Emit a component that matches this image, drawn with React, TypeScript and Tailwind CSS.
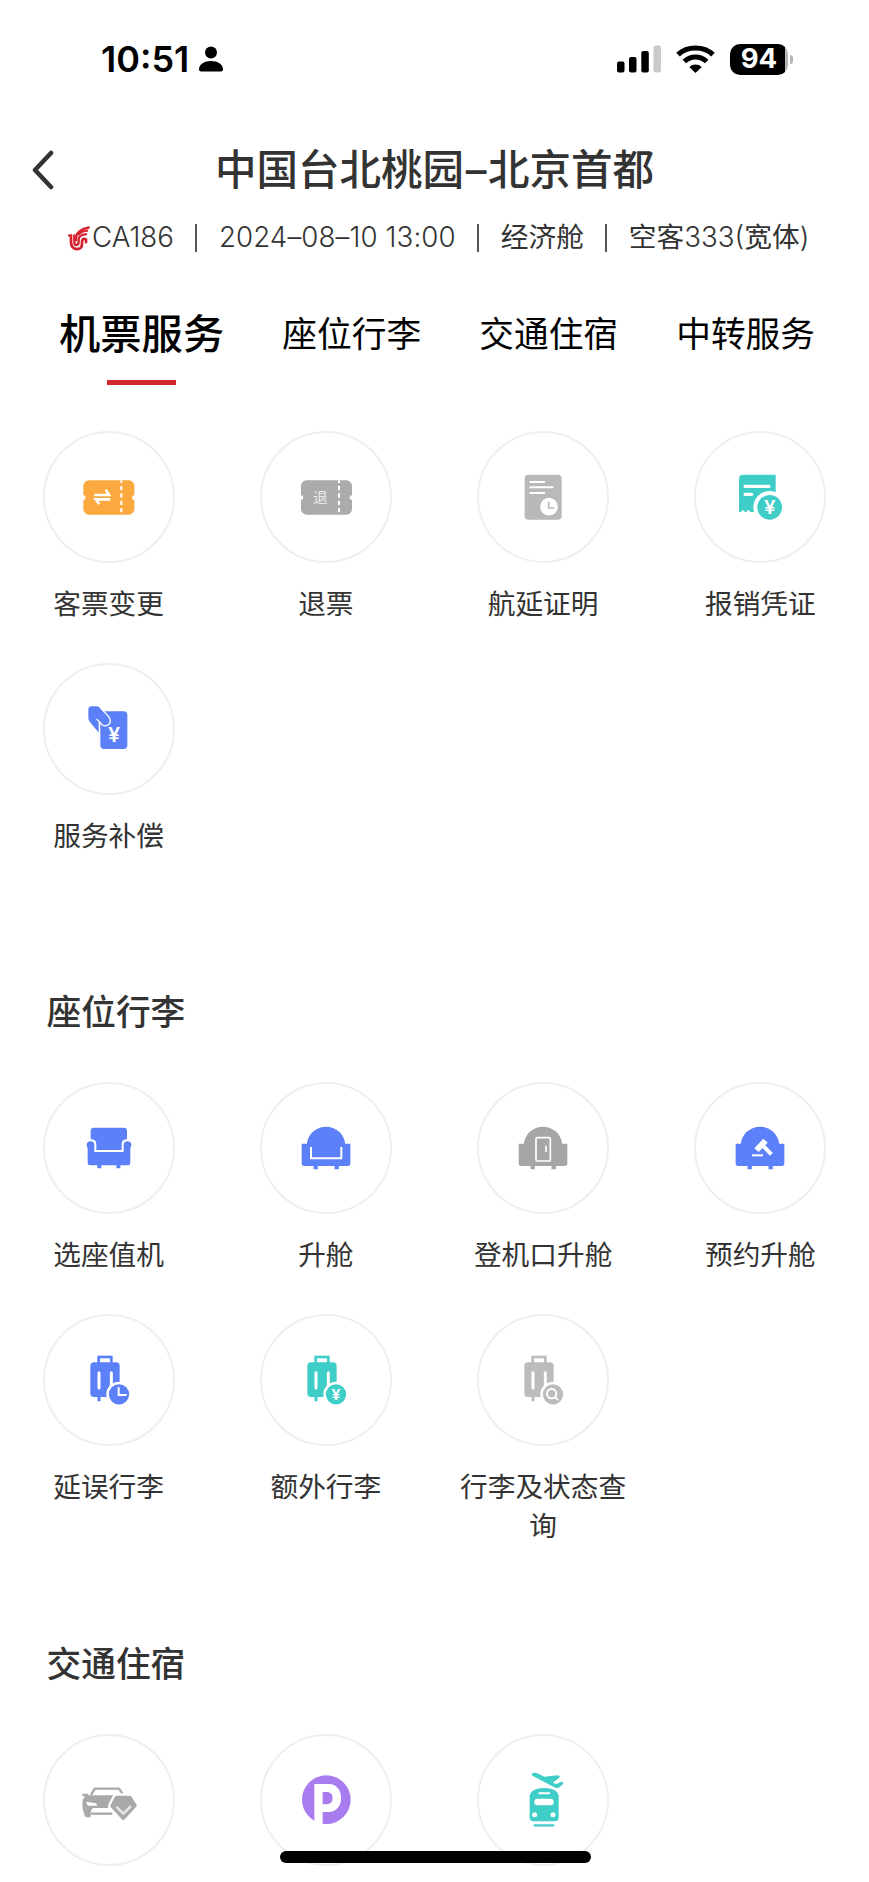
import { useState } from 'react';
import type { ReactNode } from 'react';

const BLUE = '#5b80f7';
const TEAL = '#3fcdc8';

// All service icons share one canvas with the origin in its centre.
function Icon({ children }: { children: ReactNode }) {
  return (
    <svg viewBox="-90 -90 180 180" className="size-[60px] overflow-visible" fill="none">
      {children}
    </svg>
  );
}

function Yen({ x, y, size }: { x: number; y: number; size: number }) {
  return (
    <text
      transform={`translate(${x} ${y + size * 0.36}) scale(1.08 1)`}
      fontSize={size}
      textAnchor="middle"
      fill="#fff"
      fontWeight={600}
      fontFamily="Inter, sans-serif"
    >
      ¥
    </text>
  );
}

function Ticket({ color, x = 0, children }: { color: string; x?: number; children: ReactNode }) {
  return (
    <Icon>
      <g transform={`translate(${x} 0)`}>
        <rect x={-77} y={-50} width={153} height={103} rx={17} fill={color} />
        <circle cx={-77} cy={2} r={7} fill="#fff" />
        <circle cx={76} cy={2} r={7} fill="#fff" />
        <path d="M37-50V53" stroke="#fff" strokeWidth={6} strokeDasharray="13 9" strokeDashoffset={5} />
      </g>
      {children}
    </Icon>
  );
}

function ChangeIcon() {
  return (
    <Ticket color="#fba93f">
      <path d="M-44-6H0L-10-22M4 7H-40L-29 22" stroke="#fff" strokeWidth={8} />
    </Ticket>
  );
}

function RefundIcon() {
  return (
    <Ticket color="#ababab" x={2}>
      <text x={-17} y={18} fontSize={44} textAnchor="middle" fill="#ececec" fontFamily="'Noto Sans CJK SC', sans-serif">
        退
      </text>
    </Ticket>
  );
}

function DelayProofIcon() {
  return (
    <Icon>
      <rect x={-55} y={-67} width={111} height={135} rx={12} fill="#b9b9b9" />
      <path d="M-38-45H4M-38-29H29M-38-12H4" stroke="#fff" strokeWidth={6} strokeLinecap="round" />
      <circle cx={18} cy={29} r={26.5} fill="#fff" />
      <path d="M17 14V33H34" stroke="#b9b9b9" strokeWidth={5} />
    </Icon>
  );
}

function ReceiptIcon() {
  return (
    <Icon>
      <path d="M-51-67H47V45H-63V-55Q-63-67-51-67Z" fill={TEAL} />
      <path d="M-45-32H27M-45-8H-25" stroke="#fff" strokeWidth={10} strokeLinecap="round" />
      <circle cx={-51} cy={45} r={5.5} fill="#fff" />
      <circle cx={-35} cy={45} r={5.5} fill="#fff" />
      <circle cx={29} cy={31} r={49} fill="#fff" />
      <circle cx={29} cy={31} r={37} fill={TEAL} />
      <Yen x={29} y={31} size={57} />
    </Icon>
  );
}

function CompensationIcon() {
  return (
    <Icon>
      <rect x={-26} y={-53} width={81} height={113} rx={11} fill={BLUE} />
      <path
        d="M-62-58Q-62-68-52-68H-38Q-31-68-26-62L-3-36Q7-24-2-14Q-11-8-20-13L-34-27L-28-19V14L-58-22Q-62-27-62-34Z"
        fill={BLUE}
      />
      <path d="M-25-63L-1-37Q8-25 0-14Q-10-6-20-12L-36-29M-29-21V14" stroke="#fff" strokeWidth={4} strokeLinecap="round" />
      <Yen x={15} y={17} size={60} />
    </Icon>
  );
}

function SeatIcon() {
  return (
    <Icon>
      <rect x={-55} y={-61} width={109} height={74} rx={10} fill={BLUE} />
      <path
        d="M-54-26Q-38-26-38-11V6H38V-11Q38-26 54-26Q69-24 69-11Q69-4 65 0V45Q65 52 58 52H-58Q-65 52-65 45V0Q-69-4-69-11Q-69-24-54-26Z"
        fill="#fff"
      />
      <path
        d="M-55-20Q-44-20-44-9V12H44V-9Q44-20 55-20Q67-19 67-9Q67-3 64 0V45Q64 52 57 52H-57Q-64 52-64 45V0Q-67-3-67-9Q-67-19-55-20Z"
        fill={BLUE}
      />
      <path d="M-29 50V61M28 50V61" stroke={BLUE} strokeWidth={12} />
    </Icon>
  );
}

function Armchair({ color, children }: { color: string; children: ReactNode }) {
  return (
    <Icon>
      <circle cx={0} cy={-6} r={58} fill={color} />
      <path d="M-73-13H73V46Q73 54 65 54H-65Q-73 54-73 46Z" fill={color} />
      <path d="M-31 52V64M32 52V64" stroke={color} strokeWidth={13} />
      {children}
    </Icon>
  );
}

function UpgradeIcon() {
  return (
    <Armchair color={BLUE}>
      <path d="M-45-3V31H46V-3" stroke="#fff" strokeWidth={6} />
    </Armchair>
  );
}

function GateUpgradeIcon() {
  return (
    <Armchair color="#a6a6a6">
      <rect x={-21} y={-31} width={43} height={70} rx={4} stroke="#fff" strokeWidth={5} />
      <path d="M9-7V12" stroke="#fff" strokeWidth={5} />
    </Armchair>
  );
}

function BookUpgradeIcon() {
  return (
    <Armchair color={BLUE}>
      <path d="M-17 1L10-28L23-16L-4 12Z" fill="#fff" />
      <path d="M8-8L34 19" stroke="#fff" strokeWidth={12} />
      <path d="M-24 22H9" stroke="#fff" strokeWidth={6} />
    </Armchair>
  );
}

function Suitcase({ color, children }: { color: string; children: ReactNode }) {
  return (
    <Icon>
      <rect x={-31} y={-69} width={38} height={24} stroke={color} strokeWidth={8} />
      <rect x={-56} y={-53} width={88} height={104} rx={11} fill={color} />
      <path d="M-30 48V64" stroke={color} strokeWidth={9} />
      <path d="M-30-22V24M7-22V24" stroke="#fff" strokeWidth={9} strokeLinecap="round" />
      <circle cx={30} cy={43} r={38} fill="#fff" />
      <circle cx={30} cy={43} r={30.5} fill={color} />
      {children}
    </Icon>
  );
}

function DelayedBagIcon() {
  return (
    <Suitcase color={BLUE}>
      <path d="M29 22V45H53" stroke="#fff" strokeWidth={6} />
    </Suitcase>
  );
}

function ExtraBagIcon() {
  return (
    <Suitcase color={TEAL}>
      <Yen x={30} y={43} size={44} />
    </Suitcase>
  );
}

function BagStatusIcon() {
  return (
    <Suitcase color="#bcbcbc">
      <circle cx={26} cy={41} r={14} stroke="#fff" strokeWidth={6} />
      <path d="M36 51L45 60" stroke="#fff" strokeWidth={6} />
    </Suitcase>
  );
}

function CarIcon() {
  return (
    <Icon>
      <path d="M-54-15L-43-34H30L42-17" stroke="#a9a9a9" strokeWidth={7} strokeLinejoin="round" />
      <path d="M-80-19H-62V-14H20L4 24H-50V28Q-55 30-55 40V52H-66Q-74 52-74 42Q-80 30-80 12Q-80-2-72-11H-80Z" fill="#a9a9a9" />
      <path d="M-68 5L-40 10Q-35 11-36 17H-60Q-67 16-68 5Z" fill="#fff" />
      <path d="M-50 28H-2V37H-50Z" fill="#fff" />
      <path d="M-54 41H10" stroke="#a9a9a9" strokeWidth={7} />
      <path d="M23-7H62L77 16L43 54L10 18Z" fill="#fff" stroke="#fff" strokeWidth={26} strokeLinejoin="round" />
      <path d="M23-7H62L77 16L43 54L10 18Z" fill="#a9a9a9" stroke="#a9a9a9" strokeWidth={12} strokeLinejoin="round" />
      <path d="M22 20L43 41L66 18" stroke="#e4e4e4" strokeWidth={8} />
    </Icon>
  );
}

function ParkingIcon() {
  return (
    <Icon>
      <circle cx={1} cy={-1} r={73} fill="#a87cef" />
      <text transform="translate(-43 74) scale(.83 1)" fontSize={171} fontWeight={800} fill="#fff" fontFamily="Inter, sans-serif">
        P
      </text>
    </Icon>
  );
}

function TrainIcon() {
  return (
    <Icon>
      <path
        d="M-33-79Q-28-84-17-80L4-70L44-74Q55-73 47-65L29-52L41-48L53-54Q62-56 60-48L50-39Q43-34 34-38L-30-72Q-36-75-33-79Z"
        fill={TEAL}
      />
      <path d="M-40-14Q-36-35 3-36Q43-35 47-14V52Q47 64 35 64H-28Q-40 64-40 52Z" fill={TEAL} />
      <path d="M-11-20H19" stroke="#fff" strokeWidth={6} strokeLinecap="round" />
      <rect x={-26} y={-4} width={58} height={20} rx={9} fill="#fff" />
      <circle cx={-25} cy={44} r={7.5} fill="#fff" />
      <circle cx={30} cy={44} r={7.5} fill="#fff" />
      <path d="M-25 76H31" stroke={TEAL} strokeWidth={7} strokeLinecap="round" />
    </Icon>
  );
}

function AirlineLogo() {
  return (
    <svg viewBox="0 0 66 74" className="mt-px mr-[2px] h-[25px] w-[22px]" fill="none" stroke="#d6202d" strokeLinecap="round">
      <path d="M4 28H9V48Q10 68 26 69Q42 68 42 54V45Q44 35 54 40V48" strokeWidth={8} />
      <path d="M19 28V47Q19 57 25 57Q32 56 32 46V38Q34 27 54 24" strokeWidth={7} />
      <path d="M24 42V32Q26 13 62 4" strokeWidth={7} />
      <path d="M33 25Q40 15 58 14" strokeWidth={6} />
    </svg>
  );
}

function StatusBar() {
  return (
    <div className="flex h-[118px] items-center justify-between pr-[76px] pl-[101px]">
      <div className="flex items-center gap-[10px]">
        <span className="text-[36px] leading-none font-semibold text-black">10:51</span>
        <svg viewBox="0 0 24 26" className="h-[26px] w-6">
          <circle cx="12" cy="6.5" r="6" />
          <path d="M0 23.500C0 18 5.500 15 12 15S24 18 24 23.500Q24 25.500 22 25.500H2Q0 25.500 0 23.500Z" />
        </svg>
      </div>
      <div className="flex items-center">
        <svg viewBox="0 0 45 28" className="mr-[14px] h-7 w-[45px]">
          <rect x="0" y="16.500" width="7.500" height="11" rx="2" />
          <rect x="12" y="12" width="7.500" height="15.500" rx="2" />
          <rect x="24.300" y="6" width="7.500" height="21.500" rx="2" />
          <rect x="36.500" y="0.500" width="7.500" height="27" rx="2" fill="#c9c9c9" />
        </svg>
        <svg viewBox="0 0 39 28" className="mr-[15px] h-7 w-[39px]" fill="none" stroke="#000">
          <path d="M2 9.700Q9 3 19.500 3T37 9.700" strokeWidth="5.200" />
          <path d="M8.300 16.500Q13 12 19.500 12T30.700 16.500" strokeWidth="5" />
          <path d="M13.300 22Q16 19.600 19.500 19.600T25.700 22L19.500 28Z" fill="#000" stroke="none" />
        </svg>
        <div className="flex h-[31px] w-[58px] items-center justify-center rounded-[10px] bg-linear-to-r from-black from-94% to-[#b5b5b5] to-94%">
          <span className="text-[27.500px] leading-none font-bold text-white">94</span>
        </div>
        <div className="ml-[2px] h-[9px] w-[3px] rounded-r-full bg-[#b5b5b5]" />
      </div>
    </div>
  );
}

function Separator() {
  return <span className="mx-[21.500px] h-7 w-[2px] bg-[#555]" />;
}

interface Service {
  label: string;
  icon: ReactNode;
}

function ServiceGrid({ items }: { items: Service[] }) {
  return (
    <div className="grid h-[463.400px] auto-rows-[231.700px] grid-cols-4">
      {items.map((item) => (
        <button key={item.label} className="flex flex-col items-center">
          <span className="flex size-[132px] shrink-0 items-center justify-center rounded-full border-2 border-[#efefef]">
            {item.icon}
          </span>
          <span className="mt-[22px] w-[176px] text-[27.700px] leading-[39px] text-[#333]">{item.label}</span>
        </button>
      ))}
    </div>
  );
}

function SectionTitle({ children }: { children: ReactNode }) {
  return <h2 className="pt-[92px] pb-[44px] pl-[46.500px] text-[34.700px] leading-[52px] font-medium text-[#333]">{children}</h2>;
}

const TABS = ['机票服务', '座位行李', '交通住宿', '中转服务'];

const TICKET_SERVICES: Service[] = [
  { label: '客票变更', icon: <ChangeIcon /> },
  { label: '退票', icon: <RefundIcon /> },
  { label: '航延证明', icon: <DelayProofIcon /> },
  { label: '报销凭证', icon: <ReceiptIcon /> },
  { label: '服务补偿', icon: <CompensationIcon /> },
];

const SEAT_SERVICES: Service[] = [
  { label: '选座值机', icon: <SeatIcon /> },
  { label: '升舱', icon: <UpgradeIcon /> },
  { label: '登机口升舱', icon: <GateUpgradeIcon /> },
  { label: '预约升舱', icon: <BookUpgradeIcon /> },
  { label: '延误行李', icon: <DelayedBagIcon /> },
  { label: '额外行李', icon: <ExtraBagIcon /> },
  { label: '行李及状态查询', icon: <BagStatusIcon /> },
];

const TRAVEL_ICONS = [<CarIcon key="car" />, <ParkingIcon key="parking" />, <TrainIcon key="train" />];

export default function App() {
  const [tab, setTab] = useState(TABS[0]);

  return (
    <div className="relative h-[1882px] w-[869px] overflow-hidden bg-white font-[Inter,'Noto_Sans_CJK_SC',sans-serif]">
      <StatusBar />

      <header>
        <div className="grid h-[104px] grid-cols-[80px_1fr_80px] items-center">
          <button className="pl-[31px]">
            <svg viewBox="0 0 24 40" className="h-10 w-6" fill="none" stroke="#333" strokeWidth="4.500" strokeLinecap="round" strokeLinejoin="round">
              <path d="M20 3L4 20L20 37" />
            </svg>
          </button>
          <h1 className="pt-[2px] text-center text-[41.500px] leading-none font-medium whitespace-nowrap text-[#333]">
            中国台北桃园<span className="mx-[1.500px]">–</span>北京首都
          </h1>
        </div>
        <div className="flex h-[32px] items-center pl-[68px] text-[27.700px] leading-none whitespace-nowrap text-[#333]">
          <AirlineLogo />
          <span className="font-light">CA186</span>
          <Separator />
          <span className="font-light tracking-[0.100px]">2024–08–10 13:00</span>
          <Separator />
          <span>经济舱</span>
          <Separator />
          <span>
            空客<span className="font-light">333(</span>宽体<span className="font-light">)</span>
          </span>
        </div>
      </header>

      <nav className="mt-[53px] flex justify-between pr-[54px] pl-[59px]">
        {TABS.map((name) => (
          <button key={name} onClick={() => { setTab(name); }} className="flex h-[78px] flex-col items-center">
            <span
              className={`h-[54px] leading-[54px] text-black ${
                name === tab ? 'text-[41.300px] font-medium' : 'text-[34.700px]'
              }`}
            >
              {name}
            </span>
            {name === tab && <span className="mt-[19px] h-[5px] w-[69px] bg-[#d0282e]" />}
          </button>
        ))}
      </nav>

      <main className="pt-[46px]">
        <ServiceGrid items={TICKET_SERVICES} />
        <SectionTitle>座位行李</SectionTitle>
        <ServiceGrid items={SEAT_SERVICES} />
        <SectionTitle>交通住宿</SectionTitle>
        <div className="grid grid-cols-4 justify-items-center">
          {TRAVEL_ICONS.map((icon) => (
            <button key={icon.key} className="flex size-[132px] items-center justify-center rounded-full border-2 border-[#efefef]">
              {icon}
            </button>
          ))}
        </div>
      </main>

      <div className="absolute top-[1851px] left-[279.500px] h-3 w-[311px] rounded-full bg-black" />
    </div>
  );
}
